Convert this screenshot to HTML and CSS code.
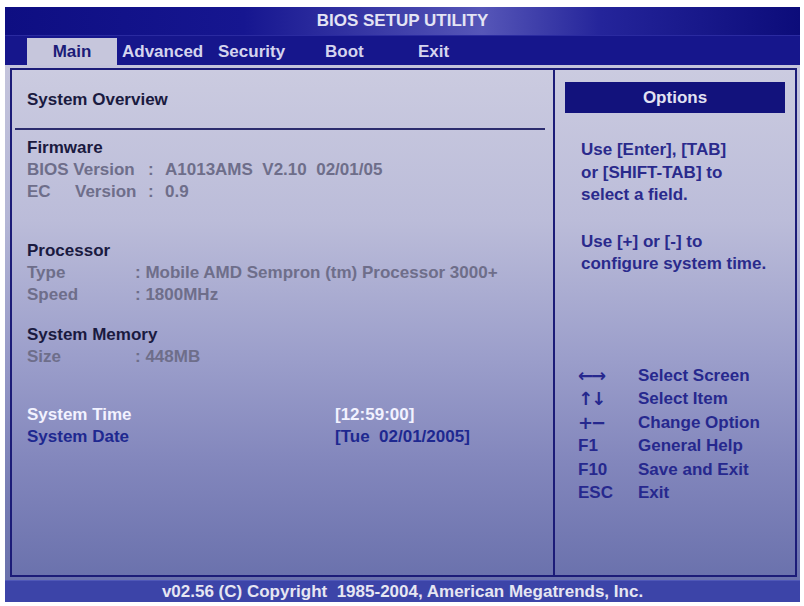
FILE: index.html
```html
<!DOCTYPE html>
<html>
<head>
  <title>BIOS Setup Utility</title>
  <link rel="stylesheet" href="styles.css">
</head>
<body>
  <div class="bios">
    <div class="title">BIOS SETUP UTILITY</div>
    <div class="tabs">
      <span class="tab active">Main</span>
      <span class="tab">Advanced</span>
      <span class="tab">Security</span>
      <span class="tab">Boot</span>
      <span class="tab">Exit</span>
    </div>
    <div class="frame">
      <div class="inner">
        <div class="main-panel">
          <div class="overview">System Overview</div>

          <div class="group firmware">
            <div class="heading">Firmware</div>
            <div class="row fw"><span>BIOS Version</span><span>:</span><span class="pre">A1013AMS  V2.10  02/01/05</span></div>
            <div class="row fw"><span><span class="ec">EC</span>Version</span><span>:</span><span>0.9</span></div>
          </div>

          <div class="group processor">
            <div class="heading">Processor</div>
            <div class="row cpu"><span>Type</span><span>: Mobile AMD Sempron (tm) Processor 3000+</span></div>
            <div class="row cpu"><span>Speed</span><span>: 1800MHz</span></div>
          </div>

          <div class="group memory">
            <div class="heading">System Memory</div>
            <div class="row cpu"><span>Size</span><span>: 448MB</span></div>
          </div>

          <div class="group clock">
            <div class="row field selected"><span>System Time</span><span>[12:59:00]</span></div>
            <div class="row field"><span>System Date</span><span class="pre">[Tue  02/01/2005]</span></div>
          </div>
        </div>

        <div class="side-panel">
          <div class="options">Options</div>
          <p class="help first">Use [Enter], [TAB]<br>or [SHIFT-TAB] to<br>select a field.</p>
          <p class="help">Use [+] or [-] to<br>configure system time.</p>
          <div class="legend">
            <span class="key arrow">&larr;&rarr;</span><span>Select Screen</span>
            <span class="key arrow">&uarr;&darr;</span><span>Select Item</span>
            <span class="key arrow">+&minus;</span><span>Change Option</span>
            <span class="key">F1</span><span>General Help</span>
            <span class="key">F10</span><span>Save and Exit</span>
            <span class="key">ESC</span><span>Exit</span>
          </div>
        </div>
      </div>
    </div>
    <div class="footer">v02.56 (C) Copyright&nbsp; 1985-2004, American Megatrends, Inc.</div>
  </div>
</body>
</html>
```

FILE: styles.css
```css
body {
    margin: 0;
    background: #ffffff;
    font-family: "Liberation Sans", Arial, sans-serif;
    font-size: 17px;
    font-weight: bold;
}
.bios {
    width: 795px;
    margin: 7px 0 0 5px;
}
.title {
    height: 28px;
    line-height: 28px;
    text-align: center;
    color: #e4e4f4;
    background: linear-gradient(90deg, #0e0e82 0%, #161690 30%, #3c3ca8 48%, #5656b8 60%, #24249a 75%, #0c0c7a 100%);
}
.tabs {
    display: grid;
    grid-template-columns: 90px 96px 107px 93px auto;
    height: 30px;
    padding-left: 22px;
    background: #16168c;
    border-top: 1px solid #2a2aa0;
    box-sizing: border-box;
}
.tab {
    padding-left: 5px;
    margin-top: 2px;
    line-height: 27px;
    color: #d4d4ee;
}
.tab.active {
    padding-left: 0;
    text-align: center;
    background: #c6c6dc;
    color: #1c1c78;
}
.frame {
    padding: 3px 3px 3px 5px;
    background: linear-gradient(#c4c4dc 0%, #b4b6d6 30%, #9396c6 60%, #757bb3 85%, #6a71ac 100%);
}
.inner {
    display: grid;
    grid-template-columns: 543px 1fr;
    height: 509px;
    box-sizing: border-box;
    border: 2px solid #1c1c78;
    background: linear-gradient(#cbcbe0 0%, #bbbcd9 30%, #9a9dca 58%, #8286bc 78%, #6b72ad 100%);
}
.main-panel {
    border-right: 2px solid #1c1c78;
}
.overview {
    margin: 0 8px 0 3px;
    padding: 19px 0 17px 12px;
    line-height: 22px;
    color: #1a1a40;
    border-bottom: 2px solid #2c2c6e;
}
.group {
    padding-left: 15px;
    line-height: 22px;
}
.firmware {
    margin-top: 7px;
}
.processor {
    margin-top: 37px;
}
.memory {
    margin-top: 18px;
}
.clock {
    margin-top: 36px;
}
.heading {
    color: #1a1a40;
}
.row {
    display: grid;
    color: #6e6e8a;
}
.row.fw {
    grid-template-columns: 121px 17px auto;
}
.row.cpu {
    grid-template-columns: 108px auto;
}
.row.field {
    grid-template-columns: 308px auto;
    color: #1e2890;
}
.row.field.selected {
    color: #f2f2ff;
}
.ec {
    display: inline-block;
    width: 48px;
}
.pre {
    white-space: pre;
}
.options {
    margin: 12px 10px 0;
    height: 31px;
    line-height: 31px;
    text-align: center;
    color: #e2e2f2;
    background: #12127c;
}
.help {
    margin: 24px 0 0;
    padding-left: 26px;
    line-height: 22.5px;
    color: #2a2a8c;
}
.help.first {
    margin-top: 26px;
}
.legend {
    display: grid;
    grid-template-columns: 60px auto;
    margin-top: 88px;
    padding-left: 23px;
    line-height: 23.5px;
    color: #26288e;
}
.key.arrow {
    font-family: "DejaVu Sans", sans-serif;
    font-size: 18px;
    letter-spacing: -2px;
}
.footer {
    height: 22px;
    line-height: 22px;
    text-align: center;
    color: #e6e6f2;
    background: #3c44a8;
    border-top: 1px solid #5058b8;
    box-sizing: border-box;
}
```
